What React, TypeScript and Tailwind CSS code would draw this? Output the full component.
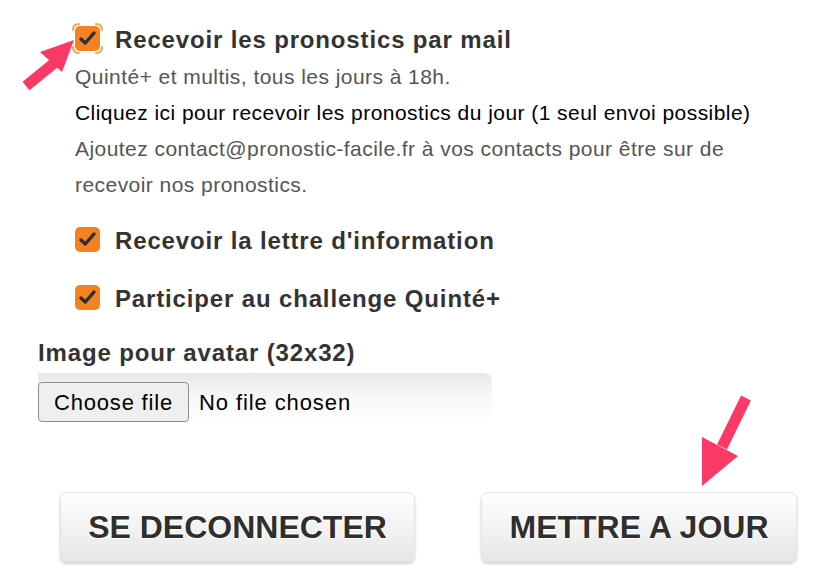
import React from "react";

const font = { fontFamily: '"Liberation Sans", Arial, Helvetica, sans-serif' };

function Check({ focus = false }: { focus?: boolean }) {
  return (
    <span className="relative inline-flex w-[25px] h-[25px] shrink-0">
      <span className="w-[25px] h-[25px] rounded-[5px] bg-[#f58220] flex items-center justify-center">
        <svg width="21" height="21" viewBox="0 0 21 21">
          <path d="M4 11 L8.3 15 L17 5" fill="none" stroke="#2e2e2e" strokeWidth="3.4" strokeLinecap="round" strokeLinejoin="round" />
        </svg>
      </span>
      {focus && (
        <svg className="absolute -left-[3px] -top-[3px]" width="31" height="31" viewBox="0 0 31 31">
          <g fill="none" stroke="#f7a35a" strokeWidth="2" strokeLinecap="round">
            <path d="M1 7 Q1 1 7 1" />
            <path d="M24 1 Q30 1 30 7" />
            <path d="M30 24 Q30 30 24 30" />
            <path d="M7 30 Q1 30 1 24" />
          </g>
        </svg>
      )}
    </span>
  );
}

function BigButton({ children, className = "" }: { children: React.ReactNode; className?: string }) {
  return (
    <div
      className={
        "h-[70px] rounded-[7px] border border-[#e2e2e2] bg-gradient-to-b from-white to-[#e6e6e6] shadow-[0_2px_3px_rgba(0,0,0,0.18)] flex items-center justify-center text-[32px] font-bold text-[#2f2f2f] [text-shadow:0_1px_0_#fff,0_-1px_0_#fff,1px_0_0_#fff,-1px_0_0_#fff] " +
        className
      }
    >
      {children}
    </div>
  );
}

const label = "text-[24px] font-bold text-[#333] leading-[28px] tracking-[0.85px]";

export default function App() {
  return (
    <div className="relative w-[814px] h-[584px] bg-white overflow-hidden" style={font}>
      <div className="pl-[75px] pt-[22px]">
        <div className="flex items-center gap-[15px]">
          <Check focus />
          <span className={label + " mt-[4px]"}>Recevoir les pronostics par mail</span>
        </div>
        <div className="mt-[5px] text-[21px] tracking-[0.45px] leading-[36px] text-[#555]">
          <div>Quinté+ et multis, tous les jours à 18h.</div>
          <div className="text-black">Cliquez ici pour recevoir les pronostics du jour (1 seul envoi possible)</div>
          <div>Ajoutez contact@pronostic-facile.fr à vos contacts pour être sur de</div>
          <div>recevoir nos pronostics.</div>
        </div>
        <div className="mt-[20px] flex items-center gap-[15px]">
          <Check />
          <span className={label + " mt-[4px]"}>Recevoir la lettre d'information</span>
        </div>
        <div className="mt-[26px] flex items-center gap-[15px]">
          <Check />
          <span className={label + " mt-[4px]"}>Participer au challenge Quinté+</span>
        </div>
      </div>
      <div className="pl-[38px] mt-[26px]">
        <div className={label}>Image pour avatar (32x32)</div>
        <div className="mt-[6px] w-[454px] rounded-tr-[8px] bg-gradient-to-b from-[#e8e8e8] via-[#f8f8f8] to-white pt-[9px] flex items-center">
          <div className="h-[40px] w-[151px] rounded-[4px] border border-[#8f8f8f] bg-[#efefef] flex items-center justify-center text-[22px] tracking-[0.8px] text-black">
            Choose file
          </div>
          <span className="ml-[10px] text-[22px] tracking-[0.9px] text-black">No file chosen</span>
        </div>
      </div>
      <div className="flex pl-[60px] mt-[70px] gap-[66px]">
        <BigButton className="w-[355px]">SE DECONNECTER</BigButton>
        <BigButton className="w-[316px]">METTRE A JOUR</BigButton>
      </div>

      <svg className="absolute left-0 top-0" width="814" height="584" viewBox="0 0 814 584">
        <path d="M26 86 L58 60" stroke="#fb3966" strokeWidth="11" strokeLinecap="butt" />
        <path d="M74 40 L40 52 L62 72 Z" fill="#fb3966" />
        <path d="M746 398 L722 447" stroke="#fb3966" strokeWidth="11" strokeLinecap="butt" />
        <path d="M702 486 L702 437 L738 456 Z" fill="#fb3966" />
      </svg>
    </div>
  );
}
